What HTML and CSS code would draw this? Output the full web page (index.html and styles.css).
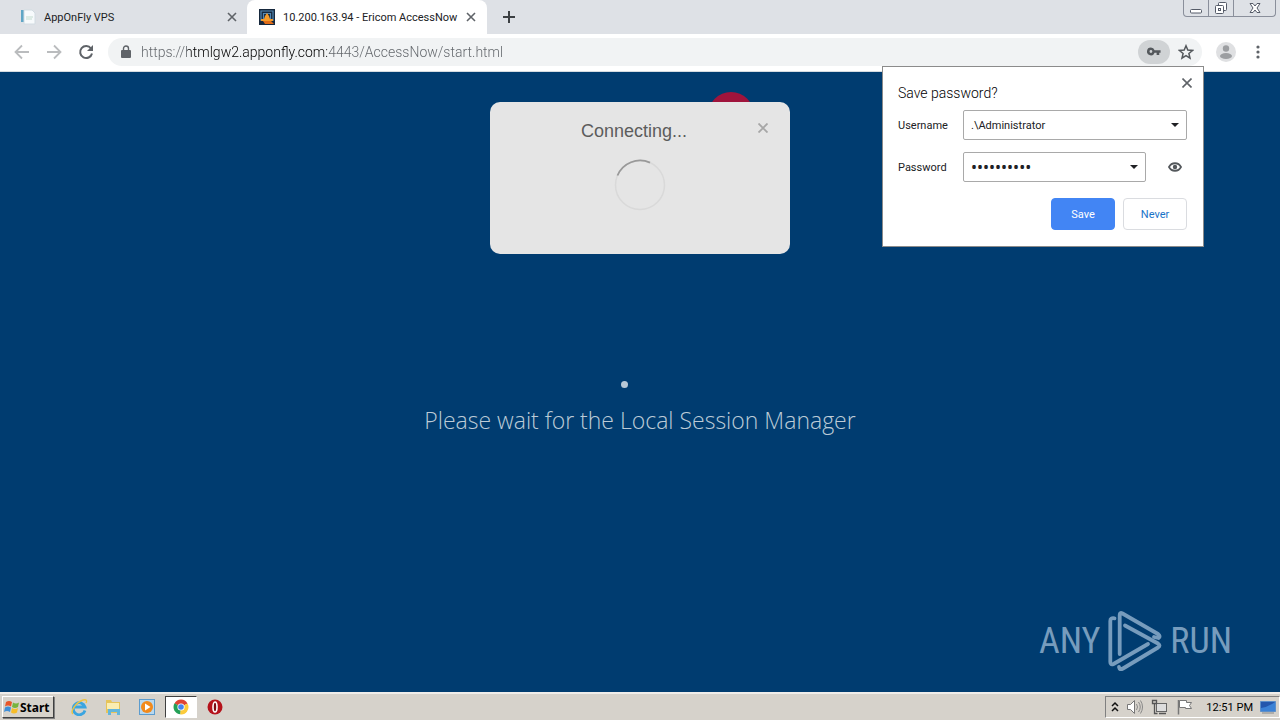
FILE: index.html
```html
<!DOCTYPE html>
<html lang="en">
<head>
    <meta charset="utf-8">
    <title>10.200.163.94 - Ericom AccessNow</title>
    <link rel="stylesheet" href="styles.css">
</head>
<body>
<div class="browser">
    <header class="tab-strip">
        <div class="tab">
            <svg class="favicon" viewBox="0 0 16 16"><rect x="1" y="1" width="4" height="12" fill="#5fa6c6"/><path d="M4 1h8l3 3v11H4z" fill="#f7fafc" stroke="#d2dce2"/><path d="M6 8h7M6 10h6" stroke="#c3dccf"/></svg>
            <span class="tab-title">AppOnFly VPS</span>
            <button class="icon-button" aria-label="Close tab"><svg width="10" height="10" viewBox="0 0 10 10"><path d="M1 1l8 8M9 1L1 9" stroke="#5f6368" stroke-width="1.6"/></svg></button>
        </div>
        <div class="tab active">
            <svg class="favicon" viewBox="0 0 16 16"><rect width="16" height="16" fill="#16283d"/><path d="M2 12V2h12v10M4.500 11V4.500h7V11" fill="none" stroke="#5288b4" stroke-width="1.200"/><path d="M8 4l2 3 1 3h3v2H2v-2h3l1-3z" fill="#f49b2a"/><path d="M4 12h8l3 3H6z" fill="#e06c18"/></svg>
            <span class="tab-title">10.200.163.94 - Ericom AccessNow</span>
            <button class="icon-button" aria-label="Close tab"><svg width="10" height="10" viewBox="0 0 10 10"><path d="M1 1l8 8M9 1L1 9" stroke="#5f6368" stroke-width="1.6"/></svg></button>
        </div>
        <button class="icon-button new-tab" aria-label="New tab"><svg width="12" height="12" viewBox="0 0 12 12"><path d="M6 0v12M0 6h12" stroke="#3c4043" stroke-width="2"/></svg></button>
        <div class="window-controls">
            <button class="control" aria-label="Minimize"><svg width="14" height="14" viewBox="0 0 14 14"><rect x="1.500" y="8.500" width="11" height="3.500" rx="1" fill="#fff" stroke="#555b68"/></svg></button>
            <button class="control" aria-label="Restore"><svg width="14" height="14" viewBox="0 0 14 14"><rect x="4.500" y="1.500" width="8" height="8" rx="1" fill="#fff" stroke="#555b68"/><rect x="1.500" y="4.500" width="8" height="8" rx="1" fill="#fff" stroke="#555b68"/><rect x="4.500" y="7.500" width="2" height="2" fill="none" stroke="#555b68"/></svg></button>
            <button class="control close" aria-label="Close"><svg width="14" height="14" viewBox="0 0 14 14"><path d="M2 2.500h3l2 2.500 2-2.500h3L9 7l3 4.500H9L7 9l-2 2.500H2L5 7z" fill="#fff" stroke="#555b68"/></svg></button>
        </div>
    </header>

    <div class="toolbar">
        <button class="icon-button nav" aria-label="Back"><svg width="16" height="16" viewBox="0 0 16 16"><path d="M15 8H2M8 1.500L1.500 8 8 14.500" fill="none" stroke="#babcbe" stroke-width="1.800"/></svg></button>
        <button class="icon-button nav" aria-label="Forward"><svg width="16" height="16" viewBox="0 0 16 16"><path d="M1 8h13M8 1.500L14.500 8 8 14.500" fill="none" stroke="#babcbe" stroke-width="1.800"/></svg></button>
        <button class="icon-button nav" aria-label="Reload"><svg width="16" height="16" viewBox="0 0 16 16"><path d="M13 4.500A6 6 0 1 0 14 9.500" fill="none" stroke="#5f6368" stroke-width="2"/><path d="M15 1v6H9z" fill="#5f6368"/></svg></button>
        <div class="omnibox">
            <svg width="10" height="14" viewBox="0 0 10 14"><rect y="5" width="10" height="8" rx="1" fill="#5f6368"/><path d="M2.500 5.500V3.500a2.500 2.500 0 0 1 5 0v2" fill="none" stroke="#5f6368" stroke-width="1.400"/></svg>
            <input class="url" type="text" aria-label="Address" value="https://htmlgw2.apponfly.com:4443/AccessNow/start.html">
            <button class="icon-button key" aria-label="Manage passwords"><svg width="14" height="9" viewBox="0 0 16 10"><path fill="#54585c" fill-rule="evenodd" d="M4.500 0.500a4.500 4.500 0 1 0 4.200 6H11v2.500h3V6.500h1.500v-3H8.700A4.500 4.500 0 0 0 4.500 0.500zM4.500 3.400a1.600 1.600 0 1 1 0 3.200 1.600 1.600 0 0 1 0-3.200z"/></svg></button>
            <button class="icon-button star" aria-label="Bookmark"><svg width="16" height="16" viewBox="0 0 16 16"><path d="M8 1.800l1.800 4.300 4.700.4-3.600 3 1.100 4.600L8 11.600l-4 2.500 1.100-4.600-3.600-3 4.700-.4z" fill="none" stroke="#54585c" stroke-width="1.500"/></svg></button>
        </div>
        <button class="icon-button profile" aria-label="Profile"><svg width="20" height="20" viewBox="0 0 20 20"><circle cx="10" cy="10" r="10" fill="#dfe0e2"/><circle cx="10" cy="6.500" r="3.200" fill="#9c9ea1"/><ellipse cx="10" cy="14" rx="6" ry="3" fill="#9c9ea1"/></svg></button>
        <button class="icon-button more" aria-label="Menu"><svg width="4" height="14" viewBox="0 0 4 14"><circle cx="2" cy="2" r="1.600" fill="#5f6368"/><circle cx="2" cy="7" r="1.600" fill="#5f6368"/><circle cx="2" cy="12" r="1.600" fill="#5f6368"/></svg></button>
    </div>

    <form class="password-popup">
        <button type="button" class="icon-button popup-close" aria-label="Close"><svg width="10" height="10" viewBox="0 0 10 10"><path d="M.5.5l9 9M9.500.5l-9 9" stroke="#5f6368" stroke-width="1.600"/></svg></button>
        <h2>Save password?</h2>
        <div class="field">
            <label for="username">Username</label>
            <select id="username" class="box"><option>.\Administrator</option></select>
        </div>
        <div class="field">
            <label for="password">Password</label>
            <input id="password" class="box dots" type="password" value="0123456789">
            <button type="button" class="icon-button eye" aria-label="Show password"><svg width="14" height="10" viewBox="0 0 14 10"><path d="M1 5c2.600-5 9.400-5 12 0-2.600 5-9.400 5-12 0z" fill="#fff" stroke="#54585c" stroke-width="1.800"/><circle cx="7" cy="5" r="2.200" fill="#54585c"/></svg></button>
        </div>
        <div class="actions">
            <button type="button" class="btn save">Save</button>
            <button type="button" class="btn never">Never</button>
        </div>
    </form>

    <main class="session">
        <div class="red-dot"></div>
        <section class="dialog">
            <div class="dialog-header">
                <h1>Connecting...</h1>
                <button class="icon-button" aria-label="Cancel"><svg width="10" height="10" viewBox="0 0 10 10"><path d="M.5.5l9 9M9.500.5l-9 9" stroke="#a6a6a6" stroke-width="1.800"/></svg></button>
            </div>
            <svg class="spinner" viewBox="0 0 52 52"><circle cx="26" cy="26" r="24.500" fill="none" stroke="#d9d9d9" stroke-width="1.500"/><path d="M3.500 16.500A24.500 24.500 0 0 1 36 3.600" fill="none" stroke="#999" stroke-width="1.800"/></svg>
        </section>
        <div class="loading-dot"></div>
        <p class="wait-text">Please wait for the Local Session Manager</p>
        <div class="watermark">
            <span>ANY</span>
            <svg width="56" height="62" viewBox="0 0 56 62"><g fill="none" stroke="#779cbd" stroke-width="3.800" stroke-linejoin="round" stroke-linecap="round"><path d="M7.500 8.300Q3.300 7.500 3.300 11V52Q3.300 55.500 6.500 54L41 34"/><path d="M12.700 44V5Q12.700 2 15.500 3.500L51 24Q54 26.500 51.500 28L47 27"/><path d="M18 15.500L51 33.500Q54 35.500 51 37.500L16 58.500Q12.500 60.500 12 57"/></g></svg>
            <span>RUN</span>
        </div>
    </main>
</div>

<footer class="taskbar">
    <button class="start"><svg width="16" height="16" viewBox="0 0 16 16"><path d="M2 3q3-2 6 0L7 7.500q-3-2-6 0z" fill="#e8562a"/><path d="M9 3.500q3 2 6 0L14 8q-3 2-6 0z" fill="#77b43f"/><path d="M1 8.500q3-2 6 0L6 13q-3-2-6 0z" fill="#3f8fd8"/><path d="M8 9q3 2 6 0l-1 4.500q-3 2-6 0z" fill="#f7bd29"/></svg>Start</button>
    <button class="task" aria-label="Internet Explorer"><svg width="18" height="18" viewBox="0 0 18 18"><path d="M15 12.500A6 6 0 1 1 15 9H5" fill="none" stroke="#3ba5e0" stroke-width="2.800"/><path d="M3 16C0 14 5 5 13 2c4-1 4 1 3 3" fill="none" stroke="#edc343" stroke-width="1.400"/></svg></button>
    <button class="task" aria-label="Explorer"><svg width="18" height="18" viewBox="0 0 18 18"><path d="M2 2h5l1 2h8v11H2z" fill="#e6c45a"/><path d="M3 5h12v6H3z" fill="#faedb1"/><path d="M4 17v-6h12v6h-3v-3H7v3z" fill="#62b6dc"/></svg></button>
    <button class="task" aria-label="Media Player"><svg width="18" height="18" viewBox="0 0 18 18"><rect x="1.500" y="1.500" width="15" height="15" fill="#b8d8ef" stroke="#5c9cce"/><circle cx="9" cy="9" r="6" fill="#f28a1c"/><path d="M7 5.500v7L12.500 9z" fill="#fff"/></svg></button>
    <button class="task pressed" aria-label="Chrome"><svg width="16" height="16" viewBox="0 0 16 16"><path d="M8 8L1.500 4.500A7.300 7.300 0 0 1 14.500 4.500z" fill="#df4434"/><path d="M8 8L1.500 4.300A7.300 7.300 0 0 0 7.500 15.300z" fill="#24a057"/><path d="M8 8l-.8 7.300A7.300 7.300 0 0 0 14.500 4.500z" fill="#fccb3b"/><circle cx="8" cy="8" r="3.600" fill="#fff"/><circle cx="8" cy="8" r="2.800" fill="#4584f0"/></svg></button>
    <button class="task" aria-label="Opera"><svg width="16" height="16" viewBox="0 0 16 16"><circle cx="8" cy="8" r="7.500" fill="#b5121b"/><ellipse cx="8" cy="8" rx="2" ry="5" fill="#7d0c12" stroke="#fff" stroke-width="1.600"/></svg></button>
    <div class="tray">
        <svg width="8" height="12" viewBox="0 0 8 12"><path d="M1 5l3-3 3 3M1 10l3-3 3 3" fill="none" stroke="#111" stroke-width="1.500"/></svg>
        <svg width="18" height="16" viewBox="0 0 18 16"><path d="M1.500 5.500h3l4-4v13l-4-4h-3z" fill="#fff" stroke="#777"/><path d="M10.500 5q2 3 0 6M12.500 3q3.500 5 0 10M14.500 1.500q4 6.500 0 13" fill="none" stroke="#888"/></svg>
        <svg width="18" height="16" viewBox="0 0 18 16"><rect x="5.500" y="4.500" width="10" height="8" fill="#ddd" stroke="#666"/><path d="M8 14.500h7" stroke="#555" stroke-width="1.500"/><path d="M1.500 1.500h4v3h-4zM3.500 5v9.500h3" fill="none" stroke="#555" stroke-width="1.300"/></svg>
        <svg width="18" height="16" viewBox="0 0 18 16"><path d="M3.500 1.500h7v2h5l-2 3 2 3H9.500v-1h-6z" fill="#fff" stroke="#777"/><path d="M2.500 1v14.500" stroke="#777" stroke-width="1.500"/></svg>
        <time>12:51 PM</time>
        <svg width="16" height="14" viewBox="0 0 16 14"><path d="M.5 1.500h15v10H.5z" fill="#2457ad" stroke="#5d8fc9"/><path d="M1 8q7-1 14-6v9H1z" fill="#3c82d6"/><path d="M2 13h12" stroke="#888"/></svg>
    </div>
</footer>
</body>
</html>
```
FILE: styles.css
```css
* {
    box-sizing: border-box;
}

body {
    margin: 0;
    min-height: 100vh;
    display: flex;
    flex-direction: column;
    font-family: Roboto, "Noto Sans", sans-serif;
    font-size: 11px;
    color: #202124;
}

h1, h2, p {
    margin: 0;
    font-weight: normal;
}

button, input, select {
    font: inherit;
    color: inherit;
}

svg {
    display: block;
    flex: none;
}

.browser {
    position: relative;
    flex: 1;
    display: flex;
    flex-direction: column;
}

.icon-button {
    display: flex;
    align-items: center;
    justify-content: center;
    flex: none;
    padding: 0;
    border: none;
    background: none;
}

/* tabs */
.tab-strip {
    display: flex;
    align-items: stretch;
    height: 34px;
    padding-left: 8px;
    background: #dee1e6;
}

.tab {
    display: flex;
    align-items: center;
    width: 239px;
    padding: 0 10px 0 12px;
}

.tab.active {
    width: 240px;
    padding-right: 11px;
    background: #fff;
    border-radius: 8px 8px 0 0;
}

.favicon {
    width: 16px;
    height: 16px;
    margin-right: 8px;
}

.tab-title {
    flex: 1;
    overflow: hidden;
    white-space: nowrap;
}

.new-tab {
    width: 44px;
}

.window-controls {
    display: flex;
    margin-left: auto;
    height: 17px;
    margin-right: 4px;
    border: 1px solid #8a8f9b;
    border-top: none;
    border-radius: 0 0 4px 4px;
}

.control {
    display: flex;
    align-items: center;
    justify-content: center;
    width: 25px;
    padding: 0;
    border: none;
    border-right: 1px solid #8a8f9b;
    background: none;
}

.control.close {
    width: 41px;
    border-right: none;
}

/* toolbar */
.toolbar {
    display: flex;
    align-items: center;
    height: 38px;
    padding: 0 6px 2px;
    background: #fff;
    border-bottom: 1px solid #d5dbe0;
}

.nav {
    width: 32px;
    height: 28px;
}

.omnibox {
    flex: 1;
    display: flex;
    align-items: center;
    height: 28px;
    margin: 0 8px 0 6px;
    padding-left: 13px;
    border-radius: 14px;
    background: #f1f3f4;
}

/* scheme and path are dimmed, the host is dark */
.url {
    flex: 1;
    min-width: 0;
    padding: 0;
    margin-left: 10px;
    border: none;
    outline: none;
    font-size: 14px;
    font-weight: 300;
    color: #202124;
    background: linear-gradient(90deg, #5f6368 46px, #000 46px, #000 186px, #5f6368 186px);
    -webkit-background-clip: text;
    background-clip: text;
    -webkit-text-fill-color: transparent;
}

.key {
    width: 32px;
    height: 24px;
    border-radius: 12px;
    background: #d0d3d5;
}

.star {
    width: 32px;
    height: 24px;
}

.profile {
    width: 32px;
}

.more {
    width: 32px;
}

/* save password bubble */
.password-popup {
    position: absolute;
    top: 66px;
    right: 76px;
    width: 322px;
    padding: 16px;
    padding-left: 15px;
    background: #fff;
    border: 1px solid #8b8b8b;
    z-index: 2;
}

.password-popup h2 {
    font-size: 14px;
    font-weight: 300;
    line-height: 20px;
    margin-bottom: 7px;
    color: #000;
}

.popup-close {
    position: absolute;
    top: 11px;
    right: 11px;
}

.field {
    display: flex;
    align-items: center;
    margin-bottom: 12px;
}

.field label {
    width: 65px;
}

.box {
    flex: 1;
    min-width: 0;
    height: 30px;
    padding: 0 7px;
    border: 1px solid #a9a9a9;
    border-radius: 2px;
    appearance: none;
    background: #fff url("data:image/svg+xml,%3Csvg xmlns='http://www.w3.org/2000/svg' width='8' height='4'%3E%3Cpath d='M0 0h8L4 4z' fill='%23202124'/%3E%3C/svg%3E") no-repeat right 7px center;
}

.dots {
    font-family: "Noto Sans", sans-serif;
    font-size: 16px;
}

.eye {
    width: 24px;
    margin-left: 17px;
}

.actions {
    display: flex;
    justify-content: flex-end;
    gap: 8px;
    margin-top: 16px;
}

.btn {
    width: 64px;
    height: 32px;
    padding: 0;
    border: 1px solid #dadce0;
    border-radius: 4px;
    background: #fff;
    color: #1a73c8;
}

.btn.save {
    border-color: #4285f4;
    background: #4285f4;
    color: #fff;
}

/* remote session */
.session {
    position: relative;
    flex: 1;
    display: flex;
    flex-direction: column;
    align-items: center;
    padding-top: 30px;
    background: #003c70;
}

.red-dot {
    position: absolute;
    top: 20px;
    left: calc(50% + 68px);
    width: 46px;
    height: 46px;
    border-radius: 50%;
    background: #a0143c;
}

.dialog {
    position: relative;
    width: 300px;
    height: 152px;
    padding: 18px 20px;
    border-radius: 10px;
    background: #e5e5e5;
}

.dialog-header {
    display: flex;
    justify-content: flex-end;
    align-items: flex-start;
}

.dialog h1 {
    flex: 1;
    padding-left: 2px;
    font: 18px/22px "Liberation Sans", Arial, sans-serif;
    text-align: center;
    color: #5c5c5c;
}

.dialog-header .icon-button {
    width: 14px;
    height: 16px;
}

.spinner {
    width: 52px;
    height: 52px;
    margin: 17px auto 0;
}

.loading-dot {
    width: 7px;
    height: 7px;
    margin: 127px 32px 0 0;
    border-radius: 50%;
    background: #b8c8d6;
}

.wait-text {
    margin-top: 16px;
    font: 23px/32px "Open Sans", "Noto Sans", sans-serif;
    font-weight: 300;
    color: #bccbd7;
}

.watermark {
    display: flex;
    align-items: center;
    gap: 7px;
    align-self: flex-end;
    margin: auto 48px 20px 0;
    font: 36px/60px "Liberation Sans Narrow", "Roboto Condensed", "Roboto", sans-serif;
    color: #779cbd;
}

/* taskbar */
.taskbar {
    display: flex;
    align-items: center;
    height: 28px;
    padding-left: 2px;
    background: #d6d2cb;
    border-top: 2px solid #efedea;
}

.start {
    display: flex;
    align-items: center;
    width: 52px;
    height: 22px;
    margin-right: 9px;
    padding: 0 1px;
    border: 1px solid;
    border-color: #fff #404040 #404040 #fff;
    box-shadow: 1px 1px 0 #808080;
    background: #d6d2cb;
    font-family: "Noto Sans", sans-serif;
    font-weight: bold;
    font-size: 12px;
    color: #000;
}

.task {
    display: flex;
    align-items: center;
    justify-content: center;
    width: 32px;
    height: 22px;
    margin-right: 2px;
    padding: 0;
    border: 1px solid transparent;
    background: none;
}

.task.pressed {
    border-color: #404040 #fff #fff #404040;
    background: #fff;
}

.tray {
    display: flex;
    align-items: center;
    gap: 7px;
    height: 22px;
    margin-left: auto;
    padding: 0 3px 0 5px;
    border: 1px solid;
    border-color: #808080 #fff #fff #808080;
    color: #000;
}

.tray time {
    margin-left: 5px;
}
```
